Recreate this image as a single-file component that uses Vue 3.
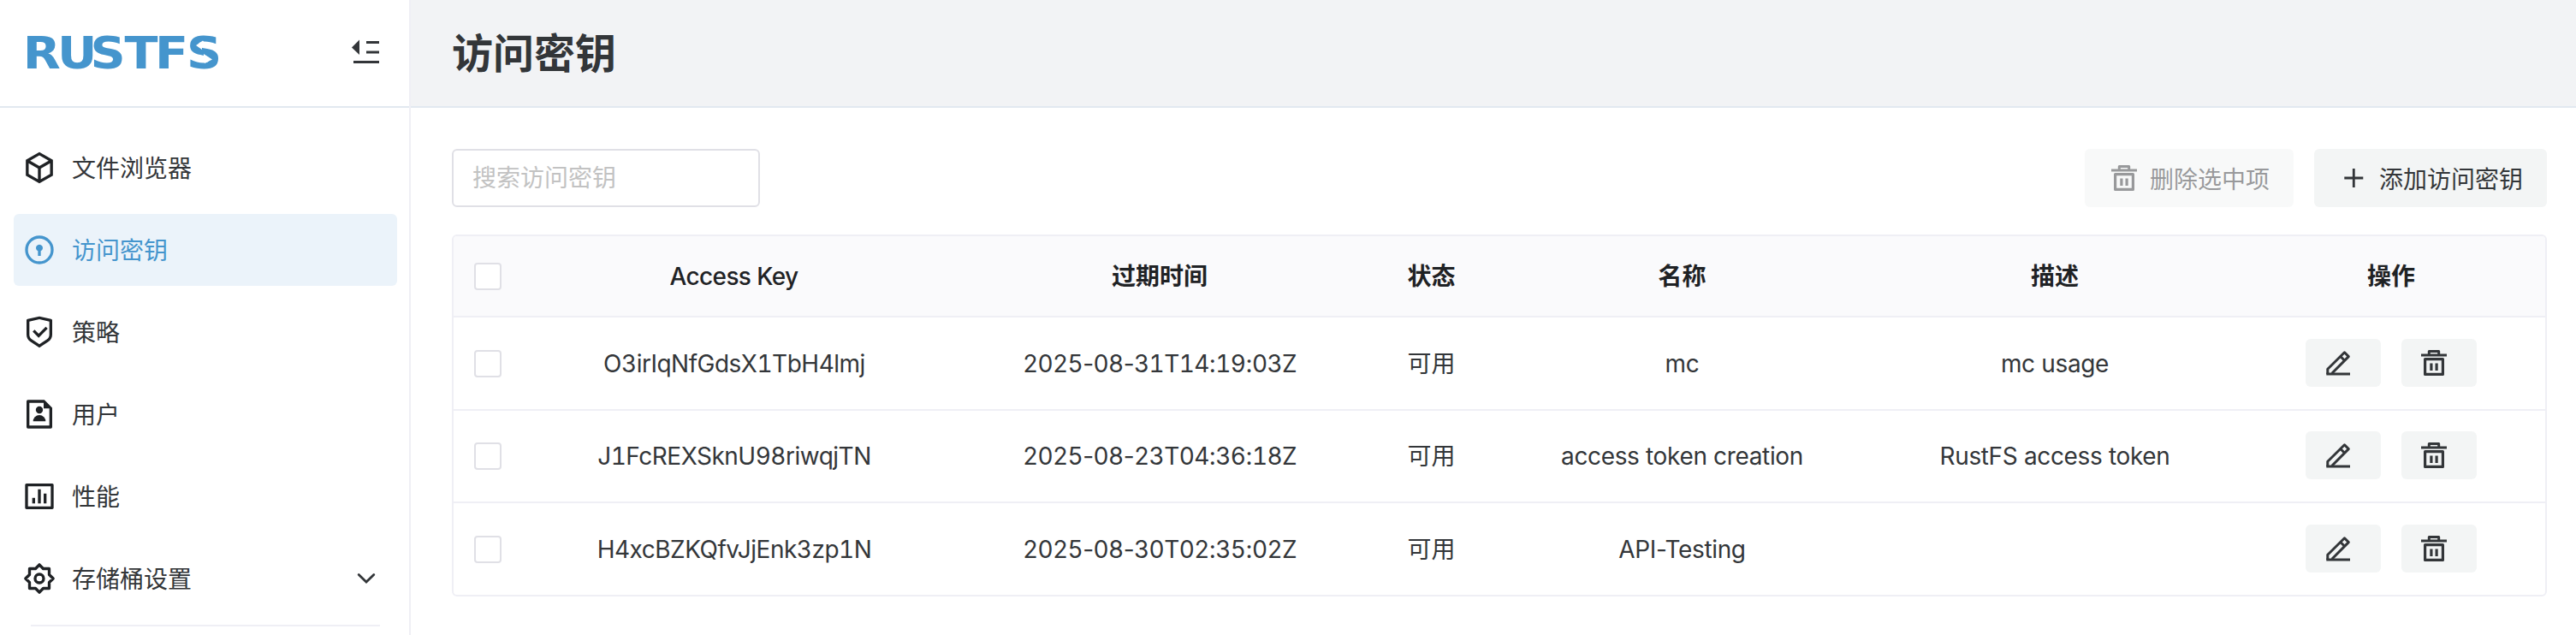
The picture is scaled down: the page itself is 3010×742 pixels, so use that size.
<script setup>
const menu = [
  { icon: 'box', label: '文件浏览器' },
  { icon: 'key', label: '访问密钥', active: true },
  { icon: 'shield', label: '策略' },
  { icon: 'user', label: '用户' },
  { icon: 'chart', label: '性能' },
  { icon: 'gear', label: '存储桶设置', expandable: true },
]

const columns = ['Access Key', '过期时间', '状态', '名称', '描述', '操作']

const rows = [
  { key: 'O3irIqNfGdsX1TbH4lmj', expires: '2025-08-31T14:19:03Z', status: '可用', name: 'mc', desc: 'mc usage' },
  { key: 'J1FcREXSknU98riwqjTN', expires: '2025-08-23T04:36:18Z', status: '可用', name: 'access token creation', desc: 'RustFS access token' },
  { key: 'H4xcBZKQfvJjEnk3zp1N', expires: '2025-08-30T02:35:02Z', status: '可用', name: 'API-Testing', desc: '' },
]

// Digit runs get tabular figures so timestamps line up; separators stay proportional.
const split = (s) => s.split(/(\d+)/).filter(Boolean)
const isDigits = (s) => /^\d+$/.test(s)
</script>

<template>
  <div class="layout">
    <svg class="defs" width="0" height="0">
      <symbol id="trash" viewBox="0 0 36 36">
        <g fill="none" stroke="currentColor">
          <path d="M12.3 8V4.5H23.7V8" stroke-width="3" stroke-linejoin="round" />
          <path d="M3 9H33" stroke-width="3" />
          <rect x="7.6" y="13.6" width="20.8" height="17.8" stroke-width="3.2" stroke-linejoin="round" />
          <path d="M14.9 18.5V27M21.1 18.5V27" stroke-width="3.2" />
        </g>
      </symbol>
    </svg>

    <aside class="sidebar">
      <div class="brand">
        <svg class="logo" width="228" height="44" viewBox="0 0 228 44">
          <text class="logo-text" transform="scale(1.1 1)" x="-4.8 31.8 66.8 103.2 135.4 169.1" y="40">RUSTFS</text>
          <path d="M205 7.5L197 13L204 18L204 15L213 17L208 10.5Z M207 34L216 29.5L206 23L206 27L199 25L206 30Z" fill="#fff" />
        </svg>
        <svg class="collapse" width="34" height="32" viewBox="0 0 34 32">
          <path d="M1 9.5L10 0.5V18Z" fill="#333639" />
          <path d="M18 3.5H33M18 15H33M3 26.5H33" stroke="#333639" stroke-width="3.2" />
        </svg>
      </div>

      <nav class="menu">
        <div v-for="m in menu" :key="m.icon" class="item" :class="{ active: m.active }">
          <svg class="item-icon" viewBox="0 0 24 24" fill="currentColor">
            <path v-if="m.icon === 'box'" d="M12 1L21.5 6.5V17.5L12 23L2.5 17.5V6.5L12 1ZM5.494 7.078L12 10.844L18.506 7.078L12 3.311L5.494 7.078ZM4.5 8.813V16.347L11 20.11V12.577L4.5 8.813ZM13 20.11L19.5 16.347V8.813L13 12.577V20.11Z" />
            <template v-else-if="m.icon === 'key'">
              <circle cx="12" cy="12" r="9" fill="none" stroke="currentColor" stroke-width="2" />
              <path d="M13 12.8V16.2H11V12.8A2.4 2.4 0 1 1 13 12.8Z" />
            </template>
            <path v-else-if="m.icon === 'shield'" d="M12 1L20.217 2.826C20.675 2.928 21 3.333 21 3.802V13.789C21 15.795 19.997 17.668 18.328 18.781L12 23L5.672 18.781C4.003 17.668 3 15.795 3 13.789V3.802C3 3.333 3.326 2.928 3.783 2.826L12 1ZM12 3.049L5 4.604V13.789C5 15.126 5.668 16.375 6.781 17.117L12 20.596L17.219 17.117C18.332 16.375 19 15.126 19 13.789V4.604L12 3.049ZM16.452 8.222L17.867 9.636L11.503 16L7.26 11.757L8.674 10.343L11.502 13.171L16.452 8.222Z" />
            <template v-else-if="m.icon === 'user'">
              <path d="M15.5 2L21 7.5V21A1 1 0 0 1 20 22H4A1 1 0 0 1 3 21V3A1 1 0 0 1 4 2H15.5ZM15 4H5V20H19V8H15V4Z" />
              <circle cx="12" cy="9" r="2.5" />
              <path d="M7.6 17A4.4 4.4 0 0 1 16.4 17Z" />
            </template>
            <path v-else-if="m.icon === 'chart'" d="M3 3H21C21.552 3 22 3.448 22 4V20C22 20.552 21.552 21 21 21H3C2.448 21 2 20.552 2 20V4C2 3.448 2.448 3 3 3ZM4 5V19H20V5H4ZM7 13H9V17H7V13ZM11 7H13V17H11V7ZM15 10H17V17H15V10Z" />
            <g v-else fill="none" stroke="currentColor" stroke-width="2" stroke-linejoin="round">
              <path d="M9.3 5.1L12 2.3L14.7 5.1H18.9V9.3L21.7 12L18.9 14.7V18.9H14.7L12 21.7L9.3 18.9H5.1V14.7L2.3 12L5.1 9.3V5.1Z" />
              <circle cx="12" cy="12" r="3" />
            </g>
          </svg>
          <span class="item-label">{{ m.label }}</span>
          <svg v-if="m.expandable" class="chevron" width="22" height="14" viewBox="0 0 22 14">
            <path d="M2.2 2.5L11 11L19.8 2.5" fill="none" stroke="#333639" stroke-width="2.8" stroke-linecap="round" />
          </svg>
        </div>
        <div class="divider"></div>
      </nav>
    </aside>

    <main class="main">
      <header class="header"><h1>访问密钥</h1></header>
      <section class="content">
        <div class="toolbar">
          <input class="search" type="text" placeholder="搜索访问密钥" />
          <div class="tools">
            <button class="btn disabled">
              <svg class="icon"><use href="#trash" /></svg><span>删除选中项</span>
            </button>
            <button class="btn">
              <svg class="icon" viewBox="0 0 36 36">
                <path d="M7.3 18H29.3M18.3 7V29" stroke="currentColor" stroke-width="2.8" />
              </svg><span>添加访问密钥</span>
            </button>
          </div>
        </div>

        <div class="table">
          <div class="row head">
            <div class="cell"><i class="check"></i></div>
            <div v-for="c in columns" :key="c" class="cell" :class="{ latin: c === 'Access Key' }">{{ c }}</div>
          </div>
          <div v-for="r in rows" :key="r.key" class="row">
            <div class="cell"><i class="check"></i></div>
            <div class="cell key">{{ r.key }}</div>
            <div class="cell date"><div><span v-for="(p, i) in split(r.expires)" :key="i" :class="{ digits: isDigits(p) }">{{ p }}</span></div></div>
            <div class="cell">{{ r.status }}</div>
            <div class="cell tight">{{ r.name }}</div>
            <div class="cell tight">{{ r.desc }}</div>
            <div class="cell actions">
              <button class="small">
                <svg class="icon" viewBox="0 0 36 36">
                  <g fill="none" stroke="currentColor" stroke-width="3">
                    <path d="M5.8 31V25.3L25.5 5.8L30.3 10.6L10.8 30.2" stroke-linejoin="round" />
                    <path d="M20.8 10.5L25.6 15.3" />
                    <path d="M4.3 31H32" />
                  </g>
                </svg>
              </button>
              <button class="small">
                <svg class="icon"><use href="#trash" /></svg>
              </button>
            </div>
          </div>
        </div>
      </section>
    </main>
  </div>
</template>

<style>
body {
  background: #fff;
}
</style>

<style scoped>
.layout {
  display: flex;
  width: 3010px;
  height: 742px;
  overflow: hidden;
  font-family: Inter, "Noto Sans CJK SC", sans-serif;
  font-size: 28px;
  color: #333639;
}
.layout * {
  box-sizing: border-box;
}
.defs {
  position: absolute;
}
.sidebar {
  flex: none;
  width: 480px;
  border-right: 2px solid #efeff5;
}
.brand {
  display: flex;
  align-items: center;
  justify-content: space-between;
  height: 126px;
  padding: 0 34px 0 32px;
  border-bottom: 2px solid #e2e8f0;
}
.logo {
  overflow: visible;
}
.logo-text {
  font-family: "DejaVu Sans", sans-serif;
  font-weight: 700;
  font-size: 52px;
  fill: #4595cd;
}
.menu {
  display: flex;
  flex-direction: column;
  gap: 12px;
  padding: 28px 14px 0 16px;
}
.item {
  display: flex;
  align-items: center;
  height: 84px;
  padding: 0 25px 0 10px;
  border-radius: 6px;
}
.item.active {
  background: #ebf3fa;
  color: #4595cd;
}
.item-icon {
  width: 40px;
  height: 40px;
  margin-right: 18px;
  color: #1f2225;
}
.active .item-icon {
  color: #4595cd;
}
.item-label {
  padding-top: 2px;
  line-height: 40px;
}
.chevron {
  margin-left: auto;
}
.divider {
  height: 2px;
  margin: 0 20px;
  background: #efeff5;
}
.main {
  flex: 1;
}
.header {
  display: flex;
  align-items: center;
  height: 126px;
  padding: 2px 0 0 48px;
  background: #f2f3f5;
  border-bottom: 2px solid #e2e8f0;
}
h1 {
  margin: 0;
  font-size: 48px;
  line-height: 64px;
  font-weight: 700;
}
.content {
  padding: 48px 34px 0 48px;
}
.toolbar {
  display: flex;
  justify-content: space-between;
  margin-bottom: 32px;
}
.search {
  width: 360px;
  height: 68px;
  padding: 0 22px;
  border: 2px solid #e0e0e6;
  border-radius: 6px;
  font: inherit;
  background: #fff;
  outline: none;
}
.search::placeholder {
  color: #c2c2c2;
}
.tools {
  display: flex;
  gap: 24px;
}
.btn {
  display: flex;
  align-items: center;
  gap: 12px;
  height: 68px;
  padding: 0 28px;
  border: 0;
  border-radius: 6px;
  font: inherit;
  color: #333639;
  background: #f3f5f5;
}
.btn.disabled {
  opacity: 0.5;
}
.icon {
  width: 36px;
  height: 36px;
  flex: none;
}
.table {
  border: 2px solid #efeff5;
  border-radius: 6px;
  overflow: hidden;
}
.row {
  display: grid;
  grid-template-columns: 80px 498px 494px 141px 445px 426px 360px;
  align-items: center;
  height: 109px;
  border-bottom: 2px solid #efeff5;
}
.row:nth-child(3) {
  height: 108px;
}
.row:last-child {
  height: 107px;
  border-bottom: 0;
}
.row.head {
  height: 95px;
  background: #fafafc;
  color: #1f2225;
  font-weight: 700;
}
.head .latin {
  padding-right: 3px;
  font-weight: 500;
  letter-spacing: -0.6px;
}
.cell {
  display: flex;
  justify-content: center;
  line-height: 40px;
  white-space: nowrap;
}
.tight {
  letter-spacing: -0.35px;
}
.key {
  padding-right: 2px;
  font-variant-numeric: tabular-nums;
  letter-spacing: -0.5px;
}
.date {
  letter-spacing: -0.58px;
}
.digits {
  font-variant-numeric: tabular-nums;
}
.check {
  width: 32px;
  height: 32px;
  border: 2px solid #e0e0e6;
  border-radius: 4px;
  background: #fff;
}
.actions {
  gap: 24px;
  padding-bottom: 2px;
}
.small {
  display: flex;
  align-items: center;
  width: 88px;
  height: 56px;
  padding: 0 0 0 20px;
  border: 0;
  border-radius: 6px;
  color: #333639;
  background: #f3f5f5;
}
</style>
